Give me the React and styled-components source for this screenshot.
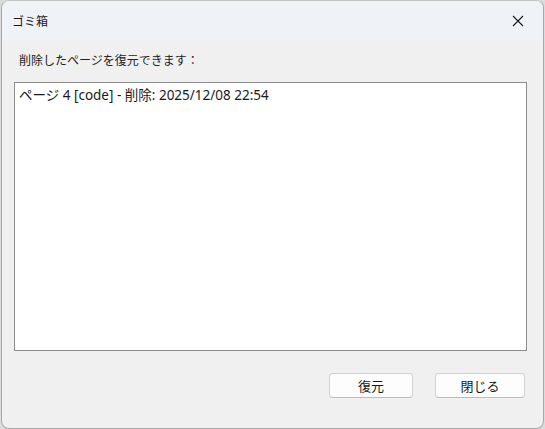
import React from 'react';
import styled, { createGlobalStyle } from 'styled-components';

const GlobalStyle = createGlobalStyle`
  html, body {
    margin: 0;
    padding: 0;
    background: #dcdcdc;
  }
  body {
    font-family: "Noto Sans", "Noto Sans CJK JP", sans-serif;
  }
`;

const Window = styled.div`
  box-sizing: border-box;
  margin-left: 1px;
  width: 543px;
  height: 429px;
  border: 1px solid #a8a8a8;
  border-top-color: #c4c4c4;
  border-radius: 8px;
  overflow: hidden;
  background: #f0f0f0;
  display: flex;
  flex-direction: column;
`;

const TitleBar = styled.div`
  height: 39px;
  flex-shrink: 0;
  background: #eff2f7;
  display: flex;
  align-items: center;
  justify-content: space-between;
  padding: 0 0 0 10px;
`;

const Title = styled.span`
  font-size: 12px;
  color: #1a1a1a;
`;

const CloseButton = styled.div`
  width: 46px;
  height: 39px;
  display: flex;
  align-items: center;
  justify-content: center;
  margin-right: 2px;
`;

const Body = styled.div`
  flex: 1;
  display: flex;
  flex-direction: column;
  padding: 11px 16px 0 12px;
`;

const Label = styled.div`
  font-size: 12px;
  color: #222;
  padding-left: 5px;
  height: 20px;
  line-height: 20px;
`;

const ListBox = styled.div`
  margin-top: 11px;
  height: 269px;
  background: #ffffff;
  border: 1px solid #8c8c8c;
  box-sizing: border-box;
  padding: 3px 3px;
`;

const ListItem = styled.div`
  font-size: 13.5px;
  color: #1a1a1a;
  height: 19px;
  line-height: 19px;
  padding-left: 1px;
`;

const ButtonRow = styled.div`
  display: flex;
  justify-content: flex-end;
  gap: 22px;
  margin-top: 22px;
  padding-right: 2px;
`;

const Button = styled.button`
  width: ${p => p.$w}px;
  height: 25px;
  box-sizing: border-box;
  border: 1px solid #d0d0d0;
  border-bottom-color: #bcbcbc;
  border-radius: 4px;
  background: #fdfdfd;
  font-family: "Noto Sans CJK JP", "Noto Sans", sans-serif;
  font-size: 13px;
  color: #1a1a1a;
  padding: 0;
`;

export default function App() {
  return (
    <>
      <GlobalStyle />
      <Window>
        <TitleBar>
          <Title>ゴミ箱</Title>
          <CloseButton>
            <svg width="12" height="12" viewBox="0 0 12 12">
              <path d="M1 1 L11 11 M11 1 L1 11" stroke="#1a1a1a" strokeWidth="1.1" fill="none" />
            </svg>
          </CloseButton>
        </TitleBar>
        <Body>
          <Label>削除したページを復元できます：</Label>
          <ListBox>
            <ListItem>ページ 4 [code] - 削除: 2025/12/08 22:54</ListItem>
          </ListBox>
          <ButtonRow>
            <Button $w={84}>復元</Button>
            <Button $w={90}>閉じる</Button>
          </ButtonRow>
        </Body>
      </Window>
    </>
  );
}
